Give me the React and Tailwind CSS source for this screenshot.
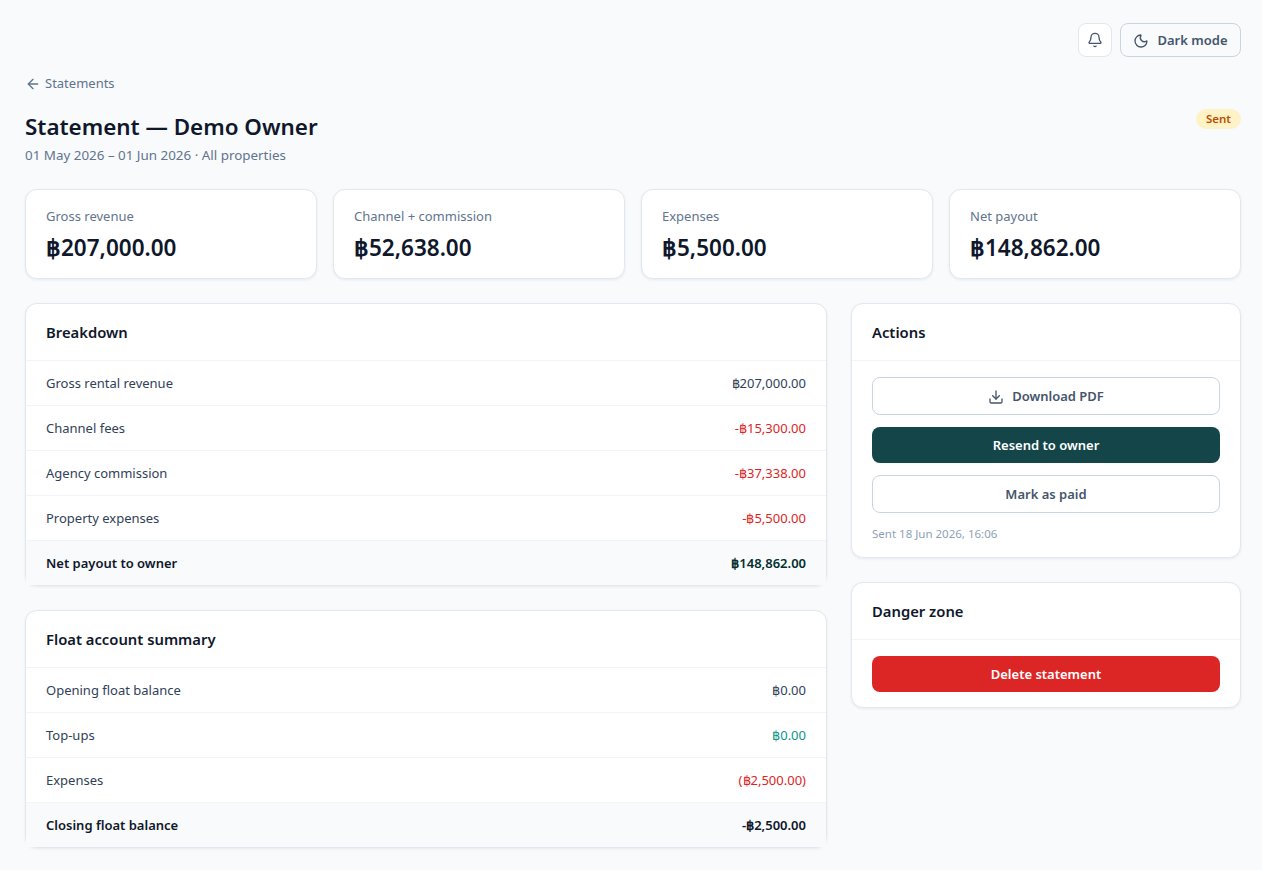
import React from 'react';
import { ArrowLeft, Bell, Moon, Download } from 'lucide-react';

const stats = [
  { label: 'Gross revenue', value: '฿207,000.00' },
  { label: 'Channel + commission', value: '฿52,638.00' },
  { label: 'Expenses', value: '฿5,500.00' },
  { label: 'Net payout', value: '฿148,862.00' },
];

const breakdown = [
  { label: 'Gross rental revenue', value: '฿207,000.00', color: 'text-slate-700' },
  { label: 'Channel fees', value: '-฿15,300.00', color: 'text-[#dc2626]' },
  { label: 'Agency commission', value: '-฿37,338.00', color: 'text-[#dc2626]' },
  { label: 'Property expenses', value: '-฿5,500.00', color: 'text-[#dc2626]' },
];

const float = [
  { label: 'Opening float balance', value: '฿0.00', color: 'text-slate-700' },
  { label: 'Top-ups', value: '฿0.00', color: 'text-[#0d9488]' },
  { label: 'Expenses', value: '(฿2,500.00)', color: 'text-[#dc2626]' },
];

function Card({ title, children }) {
  return (
    <div className="rounded-xl border border-slate-200 bg-white shadow-[0_1px_3px_rgba(15,23,42,0.07)]">
      <div className="flex h-[57px] items-center border-b border-slate-100 px-5">
        <h3 className="text-[14.8px] font-semibold text-slate-900">{title}</h3>
      </div>
      {children}
    </div>
  );
}

function Row({ label, value, color }) {
  return (
    <div className="flex h-[45px] items-center justify-between border-b border-slate-100 px-5 pt-px text-[13px] text-slate-700">
      <span>{label}</span>
      <span className={color}>{value}</span>
    </div>
  );
}

function TotalRow({ label, value, color }) {
  return (
    <div className={`flex h-[44px] items-center justify-between bg-slate-50 px-5 pt-px text-[13px] font-semibold ${color}`}>
      <span className="text-slate-900">{label}</span>
      <span>{value}</span>
    </div>
  );
}

export default function App() {
  return (
    <div className="min-h-[870px] bg-slate-50 pt-[23px] pr-[21px] pb-[22px] pl-[25px] font-['Noto_Sans',sans-serif]">
      <div className="flex justify-end gap-2">
        <button className="flex h-[34px] w-[34px] items-center justify-center rounded-lg border border-slate-200 bg-white text-slate-600">
          <Bell className="h-4 w-4" />
        </button>
        <button className="flex h-[34px] w-[121px] items-center justify-center gap-2 rounded-lg border border-slate-300 pt-px text-[13px] font-semibold text-slate-600">
          <Moon className="h-4 w-4" />
          Dark mode
        </button>
      </div>

      <a className="mt-[17px] flex h-[20px] items-center gap-1 text-[13px] text-slate-500">
        <ArrowLeft className="h-4 w-4" />
        Statements
      </a>

      <div className="mt-[19px] flex items-start justify-between">
        <div>
          <h1 className="text-[22.4px] leading-[28px] font-semibold text-slate-900">Statement — Demo Owner</h1>
          <p className="mt-[4px] text-[13.4px] leading-[20px] text-slate-500">01 May 2026 – 01 Jun 2026 · All properties</p>
        </div>
        <span className="mt-[-4px] rounded-full bg-amber-100 px-[10px] py-[2px] text-[11.5px] leading-[16px] font-semibold text-amber-700">Sent</span>
      </div>

      <div className="mt-[24px] grid grid-cols-4 gap-4">
        {stats.map((stat) => (
          <div key={stat.label} className="h-[90px] rounded-xl border border-slate-200 bg-white px-5 pt-[16px] shadow-[0_1px_3px_rgba(15,23,42,0.07)]">
            <p className="text-[13px] leading-[20px] text-slate-500">{stat.label}</p>
            <p className="mt-[8px] text-[22.5px] leading-[28px] font-semibold text-slate-900">{stat.value}</p>
          </div>
        ))}
      </div>

      <div className="mt-[24px] grid grid-cols-[1fr_390px] items-start gap-6">
        <div className="flex flex-col gap-6">
          <Card title="Breakdown">
            {breakdown.map((row) => (
              <Row key={row.label} {...row} />
            ))}
            <TotalRow label="Net payout to owner" value="฿148,862.00" color="text-teal-950" />
          </Card>
          <Card title="Float account summary">
            {float.map((row) => (
              <Row key={row.label} {...row} />
            ))}
            <TotalRow label="Closing float balance" value="-฿2,500.00" color="text-slate-900" />
          </Card>
        </div>

        <div className="flex flex-col gap-6">
          <Card title="Actions">
            <div className="flex flex-col gap-3 px-5 pt-4 pb-[14px]">
              <button className="flex h-[38px] items-center justify-center gap-2 rounded-lg border border-slate-300 bg-white pt-px text-[13px] font-semibold text-slate-600">
                <Download className="h-4 w-4" />
                Download PDF
              </button>
              <button className="h-[36px] rounded-lg bg-[#134549] pt-px text-[13px] font-semibold text-white">Resend to owner</button>
              <button className="h-[38px] rounded-lg border border-slate-300 bg-white pt-px text-[13px] font-semibold text-slate-600">Mark as paid</button>
              <p className="text-[11.5px] leading-[18px] text-slate-400">Sent 18 Jun 2026, 16:06</p>
            </div>
          </Card>
          <Card title="Danger zone">
            <div className="px-5 pt-4 pb-[15px]">
              <button className="h-[36px] w-full rounded-lg bg-[#dc2626] pt-px text-[13px] font-semibold text-white">Delete statement</button>
            </div>
          </Card>
        </div>
      </div>
    </div>
  );
}
